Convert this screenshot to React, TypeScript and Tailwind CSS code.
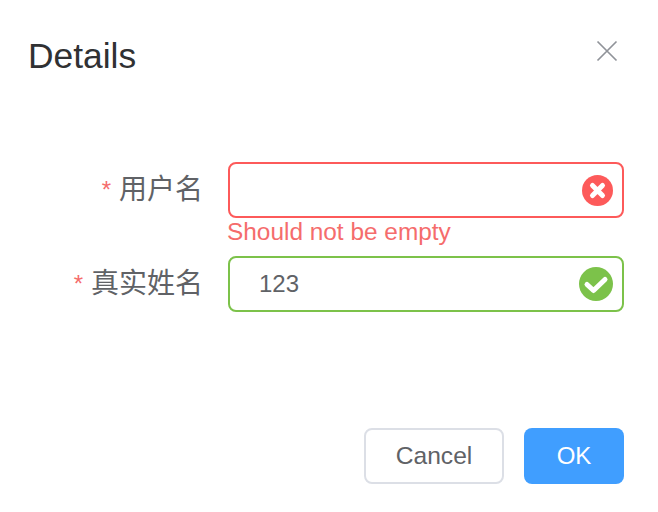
function StatusIcon({ ok }: { ok: boolean }) {
  if (ok) {
    return (
      <svg className="w-[34px] h-[34px]" viewBox="0 0 34 34">
        <circle cx="17" cy="17" r="17" fill="#7cc24a" />
        <path d="M8 17.5l6.5 6L26 12.5" fill="none" stroke="#fff" strokeWidth="5" strokeLinecap="round" strokeLinejoin="round" />
      </svg>
    );
  }
  return (
    <svg className="w-[31px] h-[31px]" viewBox="0 0 31 31">
      <circle cx="15.5" cy="15.5" r="15.5" fill="#fd5a5a" />
      <path d="M10.5 10.5l10 10M20.5 10.5l-10 10" fill="none" stroke="#fff" strokeWidth="5" strokeLinecap="round" />
    </svg>
  );
}

export default function App() {
  return (
    <div className="w-[658px] h-[512px] bg-white font-['Liberation_Sans','Noto_Sans_CJK_SC',sans-serif] overflow-hidden">
      {/* Header */}
      <div className="flex items-start justify-between pl-[28px] pr-[40px] pt-[35px]">
        <h2 className="text-[35.4px] leading-[42px] text-[#303133]">Details</h2>
        <svg className="w-[22px] h-[22px] mt-[5px] text-[#909399]" viewBox="0 0 22 22">
          <path d="M1.5 1.5l19 19M20.5 1.5l-19 19" fill="none" stroke="currentColor" strokeWidth="1.7" />
        </svg>
      </div>

      {/* Form */}
      <div className="mt-[85px] pr-[34px]">
        <div className="flex">
          <label className="w-[228px] pr-[25px] h-[56px] flex items-center justify-end text-[#606266] text-[28px]">
            <span className="text-[#f56c6c] text-[24px] mr-[8px]">*</span>
            <span>用户名</span>
          </label>
          <div className="flex-1">
            <div className="h-[56px] rounded-[8px] border-2 border-[#fd5a5a] flex items-center justify-end pr-[9px]">
              <StatusIcon ok={false} />
            </div>
            <div className="text-[24.4px] leading-[28px] -ml-[1px] text-[#f56c6c]">Should not be empty</div>
          </div>
        </div>
        <div className="flex mt-[10px]">
          <label className="w-[228px] pr-[25px] h-[56px] flex items-center justify-end text-[#606266] text-[28px]">
            <span className="text-[#f56c6c] text-[24px] mr-[8px]">*</span>
            <span>真实姓名</span>
          </label>
          <div className="flex-1 h-[56px] rounded-[8px] border-2 border-[#7cc24a] flex items-center justify-between pl-[29px] pr-[9px]">
            <span className="text-[24px] text-[#606266]">123</span>
            <StatusIcon ok />
          </div>
        </div>
      </div>

      {/* Footer */}
      <div className="flex justify-end gap-[20px] mt-[116px] pr-[34px]">
        <button className="w-[140px] h-[56px] rounded-[8px] border-2 border-[#dcdfe6] bg-white text-[#606266] text-[24.6px]">Cancel</button>
        <button className="w-[100px] h-[56px] rounded-[8px] bg-[#409eff] text-white text-[24px]">OK</button>
      </div>
    </div>
  );
}
